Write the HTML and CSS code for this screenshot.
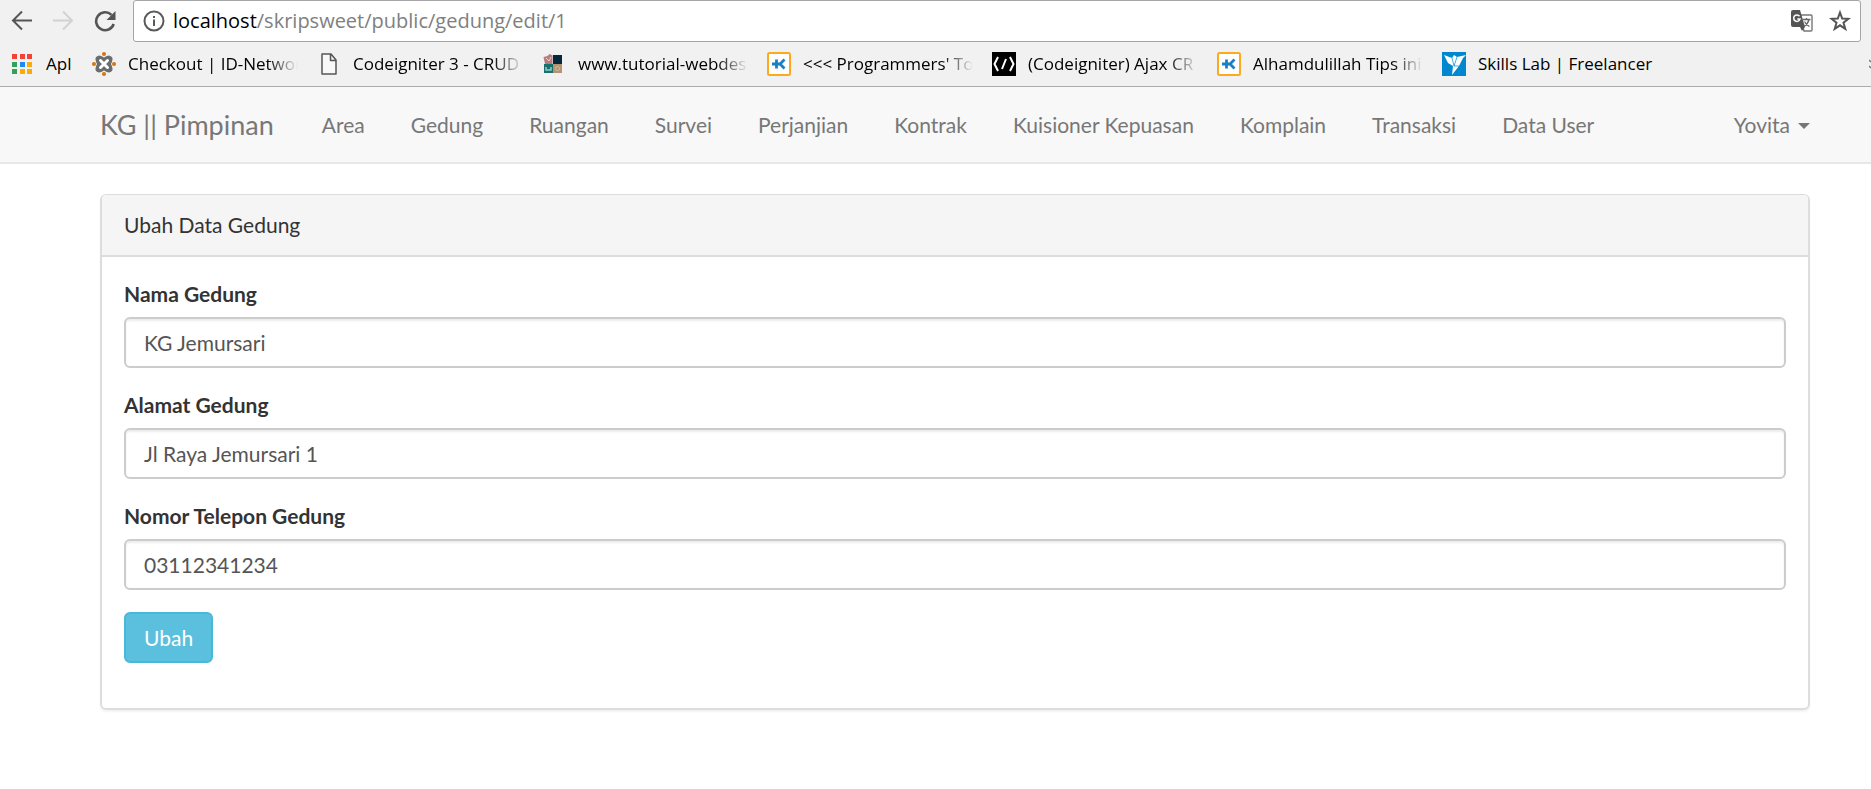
FILE: index.html
```html
<!DOCTYPE html>
<html lang="id">
<head>
<meta charset="utf-8">
<title>Ubah Data Gedung</title>
<link rel="stylesheet" href="styles.css">
</head>
<body>
<header class="browser">
  <div class="toolbar">
    <div class="controls">
      <button class="tool" type="button" aria-label="Kembali"><svg width="22" height="22" viewBox="0 0 22 22" fill="none" stroke="#555" stroke-width="2"><path d="M22 10.500H3M12 1.500l-9 9 9 9"/></svg></button>
      <button class="tool" type="button" aria-label="Maju" disabled><svg width="22" height="22" viewBox="0 0 22 22" fill="none" stroke="#d2d2d2" stroke-width="2"><path d="M1 10.500h19M11 1.500l9 9-9 9"/></svg></button>
      <button class="tool" type="button" aria-label="Muat ulang"><svg width="22" height="22" viewBox="0 0 22 22"><path d="M17.500 4.800A9 9 0 1 0 19.700 14" fill="none" stroke="#555" stroke-width="2.600"/><path d="M21.500 1v9h-9z" fill="#555"/></svg></button>
    </div>
    <div class="address">
      <svg width="22" height="22" viewBox="0 0 22 22"><circle cx="11" cy="11" r="9.500" fill="none" stroke="#5a5a5a" stroke-width="2"/><path d="M10 9.500h2V16h-2zM10 6h2v2h-2z" fill="#5a5a5a"/></svg>
      <span class="url"><span class="host">localhost</span>/skripsweet/public/gedung/edit/1</span>
      <button class="tool" type="button" aria-label="Terjemahkan"><svg width="22" height="22" viewBox="0 0 22 22"><path d="M9 5h11a1 1 0 0 1 1 1v14a1 1 0 0 1-1 1h-7z" fill="#fff" stroke="#777" stroke-width="1.400"/><path d="M2 0h7l5 17H2a2 2 0 0 1-2-2V2a2 2 0 0 1 2-2z" fill="#555"/><path d="M9 17h5l-3 4z" fill="#555"/><path d="M8.500 6.300A3.200 3.200 0 1 0 9 9H6.300" fill="none" stroke="#fff" stroke-width="1.500"/><path d="M12 9.500h7.500M15.500 8v1.500M18 9.500c-.7 3-2.500 5.500-5 7M13.500 11.500c1 2 3 4 5 5" fill="none" stroke="#666" stroke-width="1.300"/></svg></button>
      <button class="tool" type="button" aria-label="Tandai halaman"><svg width="22" height="22" viewBox="0 0 22 22"><path d="M11 2.500l2.200 6.100 6.300.2-5 3.900 1.800 6.200L11 15.300l-5.300 3.600 1.800-6.200-5-3.900 6.300-.2z" fill="none" stroke="#555" stroke-width="2"/></svg></button>
    </div>
  </div>
  <nav class="bookmarks" aria-label="Bookmark">
    <a class="bookmark" href="#"><svg width="24" height="24" viewBox="0 0 24 24"><path d="M2 2h5v5H2zM10 2h5v5h-5zM17 2h5v5h-5z" fill="#f44336"/><path d="M2 10h5v5H2zM2 17h5v5H2z" fill="#34a05a"/><path d="M10 10h5v5h-5z" fill="#1e88f5"/><path d="M17 10h5v5h-5zM10 17h5v5h-5zM17 17h5v5h-5z" fill="#fbab08"/></svg><span class="apps">Apl</span></a>
    <a class="bookmark" href="#"><svg width="24" height="24" viewBox="0 0 24 24"><g fill="#d9730d"><circle cx="12" cy="2" r="2"/><circle cx="12" cy="22" r="2"/><circle cx="2" cy="12" r="2"/><circle cx="22" cy="12" r="2"/></g><path d="M7 3.500q2 0 5 2 3-2 5-2 4 1 3.500 4-.5 3-1.500 4.500 1 1.500 1.500 4.500.5 3-3.500 4-2 0-5-2-3 2-5 2-4-1-3.500-4 .5-3 1.500-4.500-1-1.500-1.500-4.500Q3 4.500 7 3.500z" fill="#6c6c6c"/><path d="M8.500 8.500l7 7M15.500 8.500l-7 7" stroke="#fff" stroke-width="3" stroke-linecap="round"/></svg><span class="name">Checkout | ID-Networ</span></a>
    <a class="bookmark" href="#"><svg width="24" height="24" viewBox="0 0 24 24"><path d="M5 2h9l5 6v14H5zM13.500 2v6.500h5.500" fill="#f8f8f8" stroke="#555" stroke-width="1.500" stroke-linejoin="round"/></svg><span class="name">Codeigniter 3 - CRUD</span></a>
    <a class="bookmark" href="#"><svg width="24" height="24" viewBox="0 0 24 24"><path d="M1.500 5l4-1 2-2 3 1.500V12H3z" fill="#b97b7b"/><path d="M4 6l3 3 2-4" fill="none" stroke="#ead4d4"/><path d="M11 3h9v9h-9z" fill="#06283a"/><path d="M2 12h9v9H2z" fill="#17706c"/><path d="M11 12h9v9h-9z" fill="#b5936f"/><path d="M4 15v3h5v-3" fill="none" stroke="#9cc7c4" stroke-width="1.500"/><circle cx="15.500" cy="16.500" r="2" fill="none" stroke="#d4bda5"/></svg><span class="name">www.tutorial-webdesi</span></a>
    <a class="bookmark" href="#"><svg width="24" height="24" viewBox="0 0 24 24"><rect x="1" y="1" width="22" height="22" rx="1.500" fill="#fff" stroke="#fbaa1d" stroke-width="2"/><path d="M5 12h9M9.500 7.500v9M17.500 7.500L13 12l4.500 4.500" fill="none" stroke="#1b7fc4" stroke-width="2.800"/></svg><span class="name">&lt;&lt;&lt; Programmers' To</span></a>
    <a class="bookmark" href="#"><svg width="24" height="24" viewBox="0 0 24 24"><path d="M0 0h24v24H0z" fill="#000"/><path d="M6 5l-3.500 7L6 19M18 5l3.500 7-3.500 7M14 7l-4 10" fill="none" stroke="#fff" stroke-width="2"/></svg><span class="name">(Codeigniter) Ajax CR</span></a>
    <a class="bookmark" href="#"><svg width="24" height="24" viewBox="0 0 24 24"><rect x="1" y="1" width="22" height="22" rx="1.500" fill="#fff" stroke="#fbaa1d" stroke-width="2"/><path d="M5 12h9M9.500 7.500v9M17.500 7.500L13 12l4.500 4.500" fill="none" stroke="#1b7fc4" stroke-width="2.800"/></svg><span class="name">Alhamdulillah Tips ini</span></a>
    <a class="bookmark" href="#"><svg width="24" height="24" viewBox="0 0 24 24"><path d="M0 0h24v24H0z" fill="#0087cd"/><path d="M2 3l8 3 2-3 3 2 9-2-3 3-4 8-7 9 1-9-5-3z" fill="#fff"/><path d="M10 6l2 8 3-9M12 14l5 0" fill="none" stroke="#0087cd" stroke-width=".7"/></svg><span>Skills Lab | Freelancer</span></a>
    <button class="tool more" type="button" aria-label="Bookmark lainnya"><svg width="2" height="10" viewBox="0 0 2 10"><path d="M0 1l2 2M0 7l2 2" stroke="#777" stroke-width="1.500"/></svg></button>
  </nav>
</header>

<nav class="navbar">
  <a class="brand" href="#">KG || Pimpinan</a>
  <a class="nav-link" href="#">Area</a>
  <a class="nav-link" href="#">Gedung</a>
  <a class="nav-link" href="#">Ruangan</a>
  <a class="nav-link" href="#">Survei</a>
  <a class="nav-link" href="#">Perjanjian</a>
  <a class="nav-link" href="#">Kontrak</a>
  <a class="nav-link" href="#">Kuisioner Kepuasan</a>
  <a class="nav-link" href="#">Komplain</a>
  <a class="nav-link" href="#">Transaksi</a>
  <a class="nav-link" href="#">Data User</a>
  <button class="user" type="button">Yovita <span class="caret"></span></button>
</nav>

<main class="container">
  <section class="panel">
    <h1 class="panel-heading">Ubah Data Gedung</h1>
    <form class="panel-body">
      <div class="form-group">
        <label for="nama">Nama Gedung</label>
        <input class="form-control" id="nama" type="text" value="KG Jemursari">
      </div>
      <div class="form-group">
        <label for="alamat">Alamat Gedung</label>
        <input class="form-control" id="alamat" type="text" value="Jl Raya Jemursari 1">
      </div>
      <div class="form-group">
        <label for="telepon">Nomor Telepon Gedung</label>
        <input class="form-control" id="telepon" type="text" value="03112341234">
      </div>
      <div class="form-group">
        <button class="btn" type="submit">Ubah</button>
      </div>
    </form>
  </section>
</main>
</body>
</html>
```
FILE: styles.css
```css
* { box-sizing: border-box; }
body {
  margin: 0;
  background: #fff;
  color: #333;
  font: 21px/30px Lato, sans-serif;
}
a { color: inherit; text-decoration: none; }
button, input { font: inherit; }
svg { display: block; flex: none; }

.browser {
  background: #f1f1f1;
  border-bottom: 1px solid #acacac;
  color: #000;
  font-family: "Open Sans", "Noto Sans", sans-serif;
}
.toolbar { display: flex; padding-right: 10px; }
.controls {
  display: flex;
  align-items: center;
  gap: 20px;
  width: 133px;
  padding-left: 10px;
}
.tool {
  padding: 0;
  border: 0;
  background: none;
}
.address {
  display: flex;
  flex: 1;
  align-items: center;
  gap: 16px;
  height: 42px;
  padding: 0 9px;
  border: 1px solid #a5a5a5;
  border-radius: 3px;
  background: #fff;
}
.url {
  flex: 1;
  margin-left: -8px;
  color: #808080;
  font-size: 20px;
}
.host { color: #000; }
.bookmarks {
  display: flex;
  gap: 19px;
  height: 44px;
  padding-left: 10px;
  font-size: 17px;
}
.bookmark {
  display: flex;
  align-items: center;
  gap: 12px;
  white-space: nowrap;
}
.apps { min-width: 27px; }
.name {
  width: 170px;
  overflow: hidden;
  mask-image: linear-gradient(to right, #000 82%, transparent);
}
.more { margin-left: auto; }

.navbar {
  display: flex;
  align-items: center;
  height: 77px;
  padding: 0 61px 0 100px;
  border-bottom: 2px solid #e7e7e7;
  background: #f8f8f8;
  color: #777;
  white-space: nowrap;
}
.brand { padding-right: 25px; font-size: 27px; }
.nav-link { padding: 0 23px; }
.user {
  display: flex;
  align-items: center;
  gap: 8px;
  margin-left: auto;
  padding: 0;
  border: 0;
  background: none;
  color: inherit;
}
.caret {
  margin-top: 3px;
  border: 6px solid transparent;
  border-top-color: #777;
  border-bottom: 0;
}

.container { padding: 30px 61px 30px 100px; }
.panel {
  border: 2px solid #ddd;
  border-top-width: 1px;
  border-radius: 6px;
  box-shadow: 0 2px 2px rgba(0, 0, 0, .05);
}
.panel-heading {
  margin: 0;
  padding: 15px 22px;
  border-bottom: 2px solid #ddd;
  border-radius: 4px 4px 0 0;
  background: #f5f5f5;
  font-size: 21px;
  font-weight: 400;
}
.panel-body { padding: 22px 22px 23px; }
.form-group { margin-bottom: 22px; }
.form-group label {
  display: block;
  margin-bottom: 8px;
  font-weight: 700;
}
.form-control {
  display: block;
  width: 100%;
  height: 51px;
  padding: 0 18px;
  border: 2px solid #ccc;
  border-radius: 6px;
  box-shadow: inset 0 2px 2px rgba(0, 0, 0, .075);
  color: #555;
}
.btn {
  display: block;
  height: 51px;
  padding: 0 18px;
  border: 2px solid #46b8da;
  border-radius: 6px;
  background: #5bc0de;
  color: #fff;
}
```
